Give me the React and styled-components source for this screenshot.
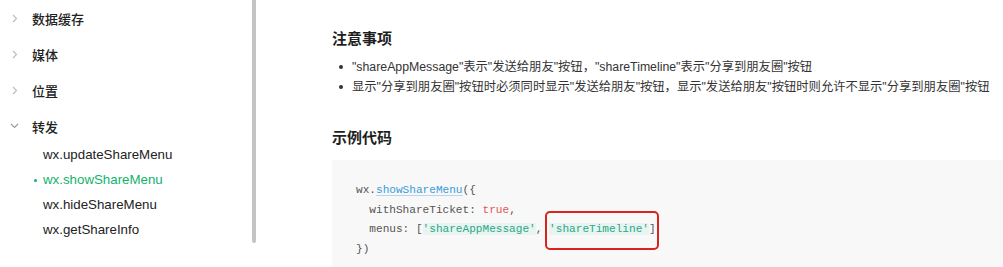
import React from "react";
import styled, { createGlobalStyle } from "styled-components";

const Global = createGlobalStyle`
  html, body { margin: 0; padding: 0; background: #fff; overflow: hidden; }
  body { font-family: "Liberation Sans", "Noto Sans CJK SC", sans-serif; }
`;

const Page = styled.div`
  display: flex;
  width: 1003px;
  height: 267px;
  overflow: hidden;
`;

const Sidebar = styled.nav`
  position: relative;
  width: 256px;
  flex: none;
  height: 267px;
  overflow: hidden;
`;

const ScrollThumb = styled.div`
  position: absolute;
  left: 252px;
  top: 0;
  width: 4px;
  height: 243px;
  background: #c4c4c4;
  border-radius: 0 0 2px 2px;
`;

const Group = styled.div``;

const GroupRow = styled.div`
  display: flex;
  align-items: center;
  height: 36px;
  font-family: "Noto Sans CJK SC", sans-serif;
  font-size: 13px;
  font-weight: 500;
  color: #222;
`;

const Chevron = styled.span`
  width: 32px;
  display: flex;
  align-items: center;
  padding-left: ${(p) => (p.$open ? "10px" : "12px")};
  box-sizing: border-box;
`;

const SubList = styled.div`
  padding-bottom: 14px;
`;

const SubItem = styled.div`
  position: relative;
  height: 25px;
  line-height: 22px;
  padding-left: 43px;
  font-family: "Liberation Sans", "Noto Sans", sans-serif;
  font-size: 13.3px;
  color: ${(p) => (p.$active ? "#12b36c" : "#222")};
  &::before {
    content: "";
    display: ${(p) => (p.$active ? "block" : "none")};
    position: absolute;
    left: 34px;
    top: 10px;
    width: 3px;
    height: 3px;
    border-radius: 50%;
    background: #12b36c;
  }
`;

const Main = styled.main`
  flex: 1;
  padding: 27px 0 0 76px;
  min-width: 0;
`;

const Heading = styled.h3`
  margin: 0 0 ${(p) => p.$mb || 0}px;
  font-family: "Noto Sans CJK SC", sans-serif;
  font-size: 15px;
  line-height: 22px;
  font-weight: 700;
  color: #1f1f1f;
`;

const Bullets = styled.ul`
  list-style: none;
  margin: 0 0 29px;
  padding: 0 0 0 20px;
`;

const Bullet = styled.li`
  position: relative;
  font-family: "Liberation Sans", "Noto Sans CJK SC", sans-serif;
  font-size: 12.3px;
  line-height: 20px;
  color: #333;
  white-space: nowrap;
  &::before {
    content: "";
    position: absolute;
    left: -13px;
    top: 8px;
    width: 4px;
    height: 4px;
    border-radius: 50%;
    background: #333;
  }
`;

const CodeBlock = styled.pre`
  margin: 0;
  padding: 21px 0 20px 24px;
  background: #f8f8f8;
  font-family: "Liberation Mono", monospace;
  font-size: 11.1px;
  line-height: 19.5px;
  color: #555;
`;

const Fn = styled.span`
  color: #3a9bd8;
  text-decoration: underline;
  text-decoration-color: rgba(58, 155, 216, 0.35);
  text-underline-offset: 2px;
`;

const Bool = styled.span`
  color: #e0565b;
`;

const Str = styled.span`
  color: #2aa88a;
  background: rgba(42, 200, 150, 0.08);
`;

const Marked = styled.span`
  position: relative;
  display: inline-block;
  height: 19.5px;
  vertical-align: top;
  &::after {
    content: "";
    position: absolute;
    left: -4px;
    right: -3px;
    top: -9px;
    bottom: -10px;
    border: 2.5px solid #d9231d;
    border-radius: 5px;
  }
`;

const ChevronRight = () => (
  <svg width="6" height="9" viewBox="0 0 6 9">
    <polyline points="1,1 4.5,4.5 1,8" fill="none" stroke="#bbb" strokeWidth="1.1" />
  </svg>
);

const ChevronDown = () => (
  <svg width="9" height="6" viewBox="0 0 9 6">
    <polyline points="1,1 4.5,4.5 8,1" fill="none" stroke="#999" strokeWidth="1.1" />
  </svg>
);

const groups = ["数据缓存", "媒体", "位置"];
const subs = ["wx.updateShareMenu", "wx.showShareMenu", "wx.hideShareMenu", "wx.getShareInfo"];

export default function App() {
  return (
    <>
      <Global />
      <Page>
        <Sidebar>
          {groups.map((g) => (
            <GroupRow key={g}>
              <Chevron><ChevronRight /></Chevron>
              {g}
            </GroupRow>
          ))}
          <Group>
            <GroupRow>
              <Chevron $open><ChevronDown /></Chevron>
              转发
            </GroupRow>
            <SubList>
              {subs.map((s) => (
                <SubItem key={s} $active={s === "wx.showShareMenu"}>{s}</SubItem>
              ))}
            </SubList>
          </Group>
          <GroupRow>
            <Chevron><ChevronRight /></Chevron>
            画布
          </GroupRow>
          <ScrollThumb />
        </Sidebar>
        <Main>
          <Heading $mb={8}>注意事项</Heading>
          <Bullets>
            <Bullet>"shareAppMessage"表示"发送给朋友"按钮，"shareTimeline"表示"分享到朋友圈"按钮</Bullet>
            <Bullet>显示"分享到朋友圈"按钮时必须同时显示"发送给朋友"按钮，显示"发送给朋友"按钮时则允许不显示"分享到朋友圈"按钮</Bullet>
          </Bullets>
          <Heading $mb={12}>示例代码</Heading>
          <CodeBlock>
            {"wx."}<Fn>showShareMenu</Fn>{"({\n"}
            {"  withShareTicket: "}<Bool>true</Bool>{",\n"}
            {"  menus: ["}<Str>'shareAppMessage'</Str>{", "}<Marked><Str>'shareTimeline'</Str>{"]"}</Marked>{"\n"}
            {"})"}
          </CodeBlock>
        </Main>
      </Page>
    </>
  );
}
